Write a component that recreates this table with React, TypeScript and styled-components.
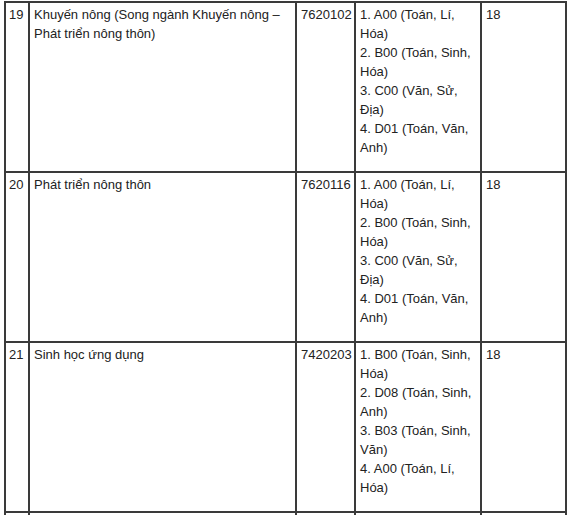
import React from "react";
import styled, { createGlobalStyle } from "styled-components";

const GlobalStyle = createGlobalStyle`
  html, body {
    margin: 0;
    padding: 0;
    background: #ffffff;
  }
  body {
    font-family: "Liberation Sans", Arial, sans-serif;
    color: #222222;
  }
`;

const Table = styled.table`
  margin: 1px 0 0 4px;
  border-collapse: separate;
  border-spacing: 0;
  border-top: 2px solid #3a3a3a;
  border-left: 2px solid #3a3a3a;
  table-layout: fixed;
  width: 563px;
`;

const Col = styled.col<{ $w: number }>`
  width: ${(p) => p.$w}px;
`;

const Cell = styled.td`
  box-sizing: border-box;
  height: 170px;
  vertical-align: top;
  padding: 2px 4px 14px 4px;
  border-right: 2px solid #3a3a3a;
  border-bottom: 2px solid #3a3a3a;
  font-size: 13px;
  line-height: 19px;
  color: #222222;
`;

const NumCell = styled(Cell)`
  padding-left: 3px;
  padding-right: 2px;
`;

const Line = styled.div`
  display: block;
`;

type Row = {
  stt: string;
  name: string;
  code: string;
  combos: string[];
  score: string;
};

const rows: Row[] = [
  {
    stt: "19",
    name: "Khuyến nông (Song ngành Khuyến nông – Phát triển nông thôn)",
    code: "7620102",
    combos: [
      "1. A00 (Toán, Lí, Hóa)",
      "2. B00 (Toán, Sinh, Hóa)",
      "3. C00 (Văn, Sử, Địa)",
      "4. D01 (Toán, Văn, Anh)",
    ],
    score: "18",
  },
  {
    stt: "20",
    name: "Phát triển nông thôn",
    code: "7620116",
    combos: [
      "1. A00 (Toán, Lí, Hóa)",
      "2. B00 (Toán, Sinh, Hóa)",
      "3. C00 (Văn, Sử, Địa)",
      "4. D01 (Toán, Văn, Anh)",
    ],
    score: "18",
  },
  {
    stt: "21",
    name: "Sinh học ứng dụng",
    code: "7420203",
    combos: [
      "1. B00 (Toán, Sinh, Hóa)",
      "2. D08 (Toán, Sinh, Anh)",
      "3. B03 (Toán, Sinh, Văn)",
      "4. A00 (Toán, Lí, Hóa)",
    ],
    score: "18",
  },
];

export default function App() {
  return (
    <>
      <GlobalStyle />
      <Table>
        <colgroup>
          <Col $w={24} />
          <Col $w={267} />
          <Col $w={59} />
          <Col $w={126} />
          <Col $w={85} />
        </colgroup>
        <tbody>
          {rows.map((r) => (
            <tr key={r.stt}>
              <NumCell>{r.stt}</NumCell>
              <Cell>{r.name}</Cell>
              <Cell>{r.code}</Cell>
              <Cell>
                {r.combos.map((c) => (
                  <Line key={c}>{c}</Line>
                ))}
              </Cell>
              <Cell>{r.score}</Cell>
            </tr>
          ))}
          <tr>
            <NumCell />
            <Cell />
            <Cell />
            <Cell />
            <Cell />
          </tr>
        </tbody>
      </Table>
    </>
  );
}
